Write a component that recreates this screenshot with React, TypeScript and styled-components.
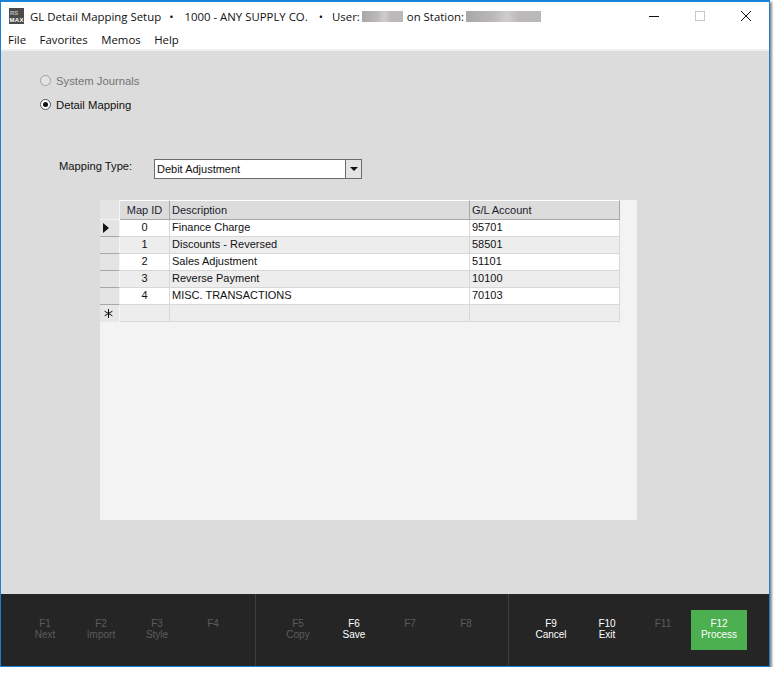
import React from "react";
import styled, { createGlobalStyle } from "styled-components";

const Global = createGlobalStyle`
  html, body { margin: 0; padding: 0; background: #fff; }
  body { font-family: "Liberation Sans", Arial, sans-serif; }
`;

const Window = styled.div`
  width: 770px;
  height: 667px;
  box-sizing: border-box;
  border: 1px solid #1683d8;
  border-top-width: 2px;
  box-shadow: 2px 2px 2px rgba(0, 0, 0, 0.45);
  display: flex;
  flex-direction: column;
  background: #dcdcdc;
`;

const TitleBar = styled.div`
  height: 28px;
  flex: none;
  background: #fff;
  display: flex;
  align-items: center;
  padding-left: 8px;
  font: 11.4px "Open Sans", sans-serif;
  color: #111;
`;

const TitleText = styled.span<{ $gap?: number }>`
  margin-left: ${(p) => p.$gap ?? 0}px;
  white-space: nowrap;
`;

const Redacted = styled.span<{ $w: number; $gap: number }>`
  display: block;
  width: ${(p) => p.$w}px;
  height: 11px;
  margin-left: ${(p) => p.$gap}px;
  background: linear-gradient(90deg, #a9a7a8 0%, #b9b7b8 35%, #cfcdce 55%, #bdb8ba 70%, #b9b9b9 100%);
`;

const Controls = styled.div`
  margin-left: auto;
  display: flex;
  align-items: center;
  height: 100%;
`;

const ControlBtn = styled.span`
  width: 46px;
  display: flex;
  justify-content: center;
  svg { display: block; }
`;

const MenuBar = styled.div`
  height: 21px;
  flex: none;
  box-sizing: border-box;
  background: #fff;
  border-bottom: 2px solid #f0f0f0;
  display: flex;
  align-items: center;
  gap: 13.5px;
  padding-left: 7px;
  font: 11.4px "Open Sans", sans-serif;
  color: #111;
`;

const Content = styled.div`
  flex: 1;
  padding: 23px 0 0 39px;
`;

const RadioRow = styled.label<{ $off?: boolean }>`
  display: flex;
  align-items: center;
  gap: 5px;
  height: 13px;
  margin-bottom: 11px;
  font-size: 11.3px;
  color: ${(p) => (p.$off ? "#747474" : "#111")};
`;

const Radio = styled.span<{ $on?: boolean; $off?: boolean }>`
  width: 11px;
  height: 11px;
  box-sizing: border-box;
  border-radius: 50%;
  border: 1px solid ${(p) => (p.$off ? "#a0a0a0" : "#555")};
  background: ${(p) => (p.$off ? "#e4e4e4" : "#fff")};
  display: flex;
  align-items: center;
  justify-content: center;
  &::after {
    content: "";
    display: ${(p) => (p.$on ? "block" : "none")};
    width: 5px;
    height: 5px;
    border-radius: 50%;
    background: #111;
  }
`;

const TypeRow = styled.div`
  display: flex;
  align-items: flex-start;
  margin: 48px 0 0 19px;
`;

const TypeLabel = styled.span`
  width: 95px;
  font-size: 11.2px;
  line-height: 14px;
  color: #111;
`;

const Select = styled.div`
  width: 208px;
  height: 20px;
  box-sizing: border-box;
  border: 1px solid #6b6b6b;
  background: #fff;
  display: flex;
  align-items: center;
  padding-left: 2px;
  font-size: 11px;
  color: #111;
`;

const SelectArrow = styled.span`
  margin-left: auto;
  width: 16px;
  height: 100%;
  box-sizing: border-box;
  border-left: 1px solid #6b6b6b;
  background: #e4e4e4;
  display: flex;
  align-items: center;
  justify-content: center;
  &::after {
    content: "";
    border-left: 4px solid transparent;
    border-right: 4px solid transparent;
    border-top: 4px solid #111;
  }
`;

const GridPanel = styled.div`
  width: 537px;
  height: 320px;
  margin: 21px 0 0 60px;
  background: #f3f3f3;
`;

const GridTable = styled.div`
  display: grid;
  width: 520px;
  grid-template-columns: 20px 50px 300px 150px;
  grid-template-rows: 20px repeat(6, 17px);
  font-size: 11px;
  color: #111;
`;

const Corner = styled.div`
  background: #e4e4e4;
  border-right: 1px solid #f6f6f6;
  border-bottom: 1px solid #f6f6f6;
  box-sizing: border-box;
`;

const HeadCell = styled.div<{ $center?: boolean }>`
  box-sizing: border-box;
  background: #dcdcdc;
  border-top: 1px solid #fff;
  border-right: 1px solid #a8a8a8;
  border-bottom: 1px solid #a8a8a8;
  display: flex;
  align-items: center;
  justify-content: ${(p) => (p.$center ? "center" : "flex-start")};
  padding-left: ${(p) => (p.$center ? 0 : 2)}px;
  color: #1c1c2c;
`;

const RowHead = styled.div<{ $last?: boolean }>`
  box-sizing: border-box;
  background: ${(p) => (p.$last ? "#e8e8e8" : "#e4e4e4")};
  border-right: 1px solid #f6f6f6;
  border-bottom: 1px solid ${(p) => (p.$last ? "#e8e8e8" : "#a8a8a8")};
  display: flex;
  align-items: center;
  padding-left: ${(p) => (p.$last ? 4 : 3)}px;
`;

const Marker = styled.span`
  border-top: 5px solid transparent;
  border-bottom: 5px solid transparent;
  border-left: 6px solid #111;
`;

const Cell = styled.div<{ $alt?: boolean; $center?: boolean }>`
  box-sizing: border-box;
  background: ${(p) => (p.$alt ? "#ededed" : "#fff")};
  border-right: 1px solid #d8d8d8;
  border-bottom: 1px solid #d8d8d8;
  display: flex;
  align-items: center;
  justify-content: ${(p) => (p.$center ? "center" : "flex-start")};
  padding: 0 0 2px ${(p) => (p.$center ? 0 : 2)}px;
`;

const Footer = styled.div`
  height: 72px;
  flex: none;
  background: #252525;
  display: flex;
`;

const KeyGroup = styled.div<{ $w: number; $pad: number; $line?: boolean }>`
  width: ${(p) => p.$w}px;
  box-sizing: border-box;
  padding: 16px 0 0 ${(p) => p.$pad}px;
  display: flex;
  border-right: ${(p) => (p.$line ? "1px solid #3e3e3e" : "0")};
`;

const Key = styled.div<{ $state: "off" | "on" | "go" }>`
  width: 56px;
  height: 40px;
  box-sizing: border-box;
  padding-top: 8px;
  text-align: center;
  font-size: 10px;
  line-height: 11px;
  color: ${(p) => (p.$state === "off" ? "#5c5c5c" : "#fff")};
  background: ${(p) => (p.$state === "go" ? "#4caf50" : "transparent")};
`;

type KeyDef = { f: string; label?: string; state: "off" | "on" | "go" };

const groups: { w: number; pad: number; line: boolean; keys: KeyDef[] }[] = [
  {
    w: 255, pad: 16, line: true,
    keys: [
      { f: "F1", label: "Next", state: "off" },
      { f: "F2", label: "Import", state: "off" },
      { f: "F3", label: "Style", state: "off" },
      { f: "F4", state: "off" },
    ],
  },
  {
    w: 253, pad: 14, line: true,
    keys: [
      { f: "F5", label: "Copy", state: "off" },
      { f: "F6", label: "Save", state: "on" },
      { f: "F7", state: "off" },
      { f: "F8", state: "off" },
    ],
  },
  {
    w: 260, pad: 14, line: false,
    keys: [
      { f: "F9", label: "Cancel", state: "on" },
      { f: "F10", label: "Exit", state: "on" },
      { f: "F11", state: "off" },
      { f: "F12", label: "Process", state: "go" },
    ],
  },
];

const rows = [
  ["0", "Finance Charge", "95701"],
  ["1", "Discounts - Reversed", "58501"],
  ["2", "Sales Adjustment", "51101"],
  ["3", "Reverse Payment", "10100"],
  ["4", "MISC. TRANSACTIONS", "70103"],
];

function Logo() {
  return (
    <svg width="15" height="16" viewBox="0 0 15 16" style={{ flex: "none" }}>
      <rect width="15" height="16" fill="#4a4a4a" />
      <text x="1" y="7" fontSize="6" fontFamily="Liberation Sans" fontWeight="bold" fill="#bdbdbd">RS</text>
      <text x="0.5" y="13.5" fontSize="6" fontFamily="Liberation Sans" fontWeight="bold" fill="#fff" textLength="14">MAX</text>
    </svg>
  );
}

function NewRowMark() {
  return (
    <svg width="9" height="9" viewBox="0 0 9 9">
      <path d="M4.5 0V9M0.6 2.2L8.4 6.8M8.4 2.2L0.6 6.8" stroke="#111" fill="none" />
    </svg>
  );
}

export default function App() {
  return (
    <>
      <Global />
      <Window>
        <TitleBar>
          <Logo />
          <TitleText $gap={6}>GL Detail Mapping Setup</TitleText>
          <TitleText $gap={8}>•</TitleText>
          <TitleText $gap={11}>1000 - ANY SUPPLY CO.</TitleText>
          <TitleText $gap={11}>•</TitleText>
          <TitleText $gap={9}>User:</TitleText>
          <Redacted $w={41} $gap={2} />
          <TitleText $gap={4}>on Station:</TitleText>
          <Redacted $w={75} $gap={2} />
          <Controls>
            <ControlBtn>
              <svg width="10" height="10" viewBox="0 0 10 10"><path d="M0 5.5H10" stroke="#111" /></svg>
            </ControlBtn>
            <ControlBtn>
              <svg width="10" height="10" viewBox="0 0 10 10"><rect x="0.5" y="0.5" width="9" height="9" fill="none" stroke="#c8c8c8" /></svg>
            </ControlBtn>
            <ControlBtn>
              <svg width="10" height="10" viewBox="0 0 10 10"><path d="M0 0L10 10M10 0L0 10" stroke="#111" /></svg>
            </ControlBtn>
          </Controls>
        </TitleBar>
        <MenuBar>
          <span>File</span>
          <span>Favorites</span>
          <span>Memos</span>
          <span>Help</span>
        </MenuBar>
        <Content>
          <RadioRow $off>
            <Radio $off />
            System Journals
          </RadioRow>
          <RadioRow>
            <Radio $on />
            Detail Mapping
          </RadioRow>
          <TypeRow>
            <TypeLabel>Mapping Type:</TypeLabel>
            <Select>
              Debit Adjustment
              <SelectArrow />
            </Select>
          </TypeRow>
          <GridPanel>
            <GridTable>
              <Corner />
              <HeadCell $center>Map ID</HeadCell>
              <HeadCell>Description</HeadCell>
              <HeadCell>G/L Account</HeadCell>
              {rows.map((r, i) => (
                <React.Fragment key={r[0]}>
                  <RowHead>{i === 0 && <Marker />}</RowHead>
                  <Cell $center $alt={i % 2 === 1}>{r[0]}</Cell>
                  <Cell $alt={i % 2 === 1}>{r[1]}</Cell>
                  <Cell $alt={i % 2 === 1}>{r[2]}</Cell>
                </React.Fragment>
              ))}
              <RowHead $last><NewRowMark /></RowHead>
              <Cell $alt />
              <Cell $alt />
              <Cell $alt />
            </GridTable>
          </GridPanel>
        </Content>
        <Footer>
          {groups.map((g) => (
            <KeyGroup key={g.keys[0].f} $w={g.w} $pad={g.pad} $line={g.line}>
              {g.keys.map((k) => (
                <Key key={k.f} $state={k.state}>
                  {k.f}
                  <br />
                  {k.label}
                </Key>
              ))}
            </KeyGroup>
          ))}
        </Footer>
      </Window>
    </>
  );
}
